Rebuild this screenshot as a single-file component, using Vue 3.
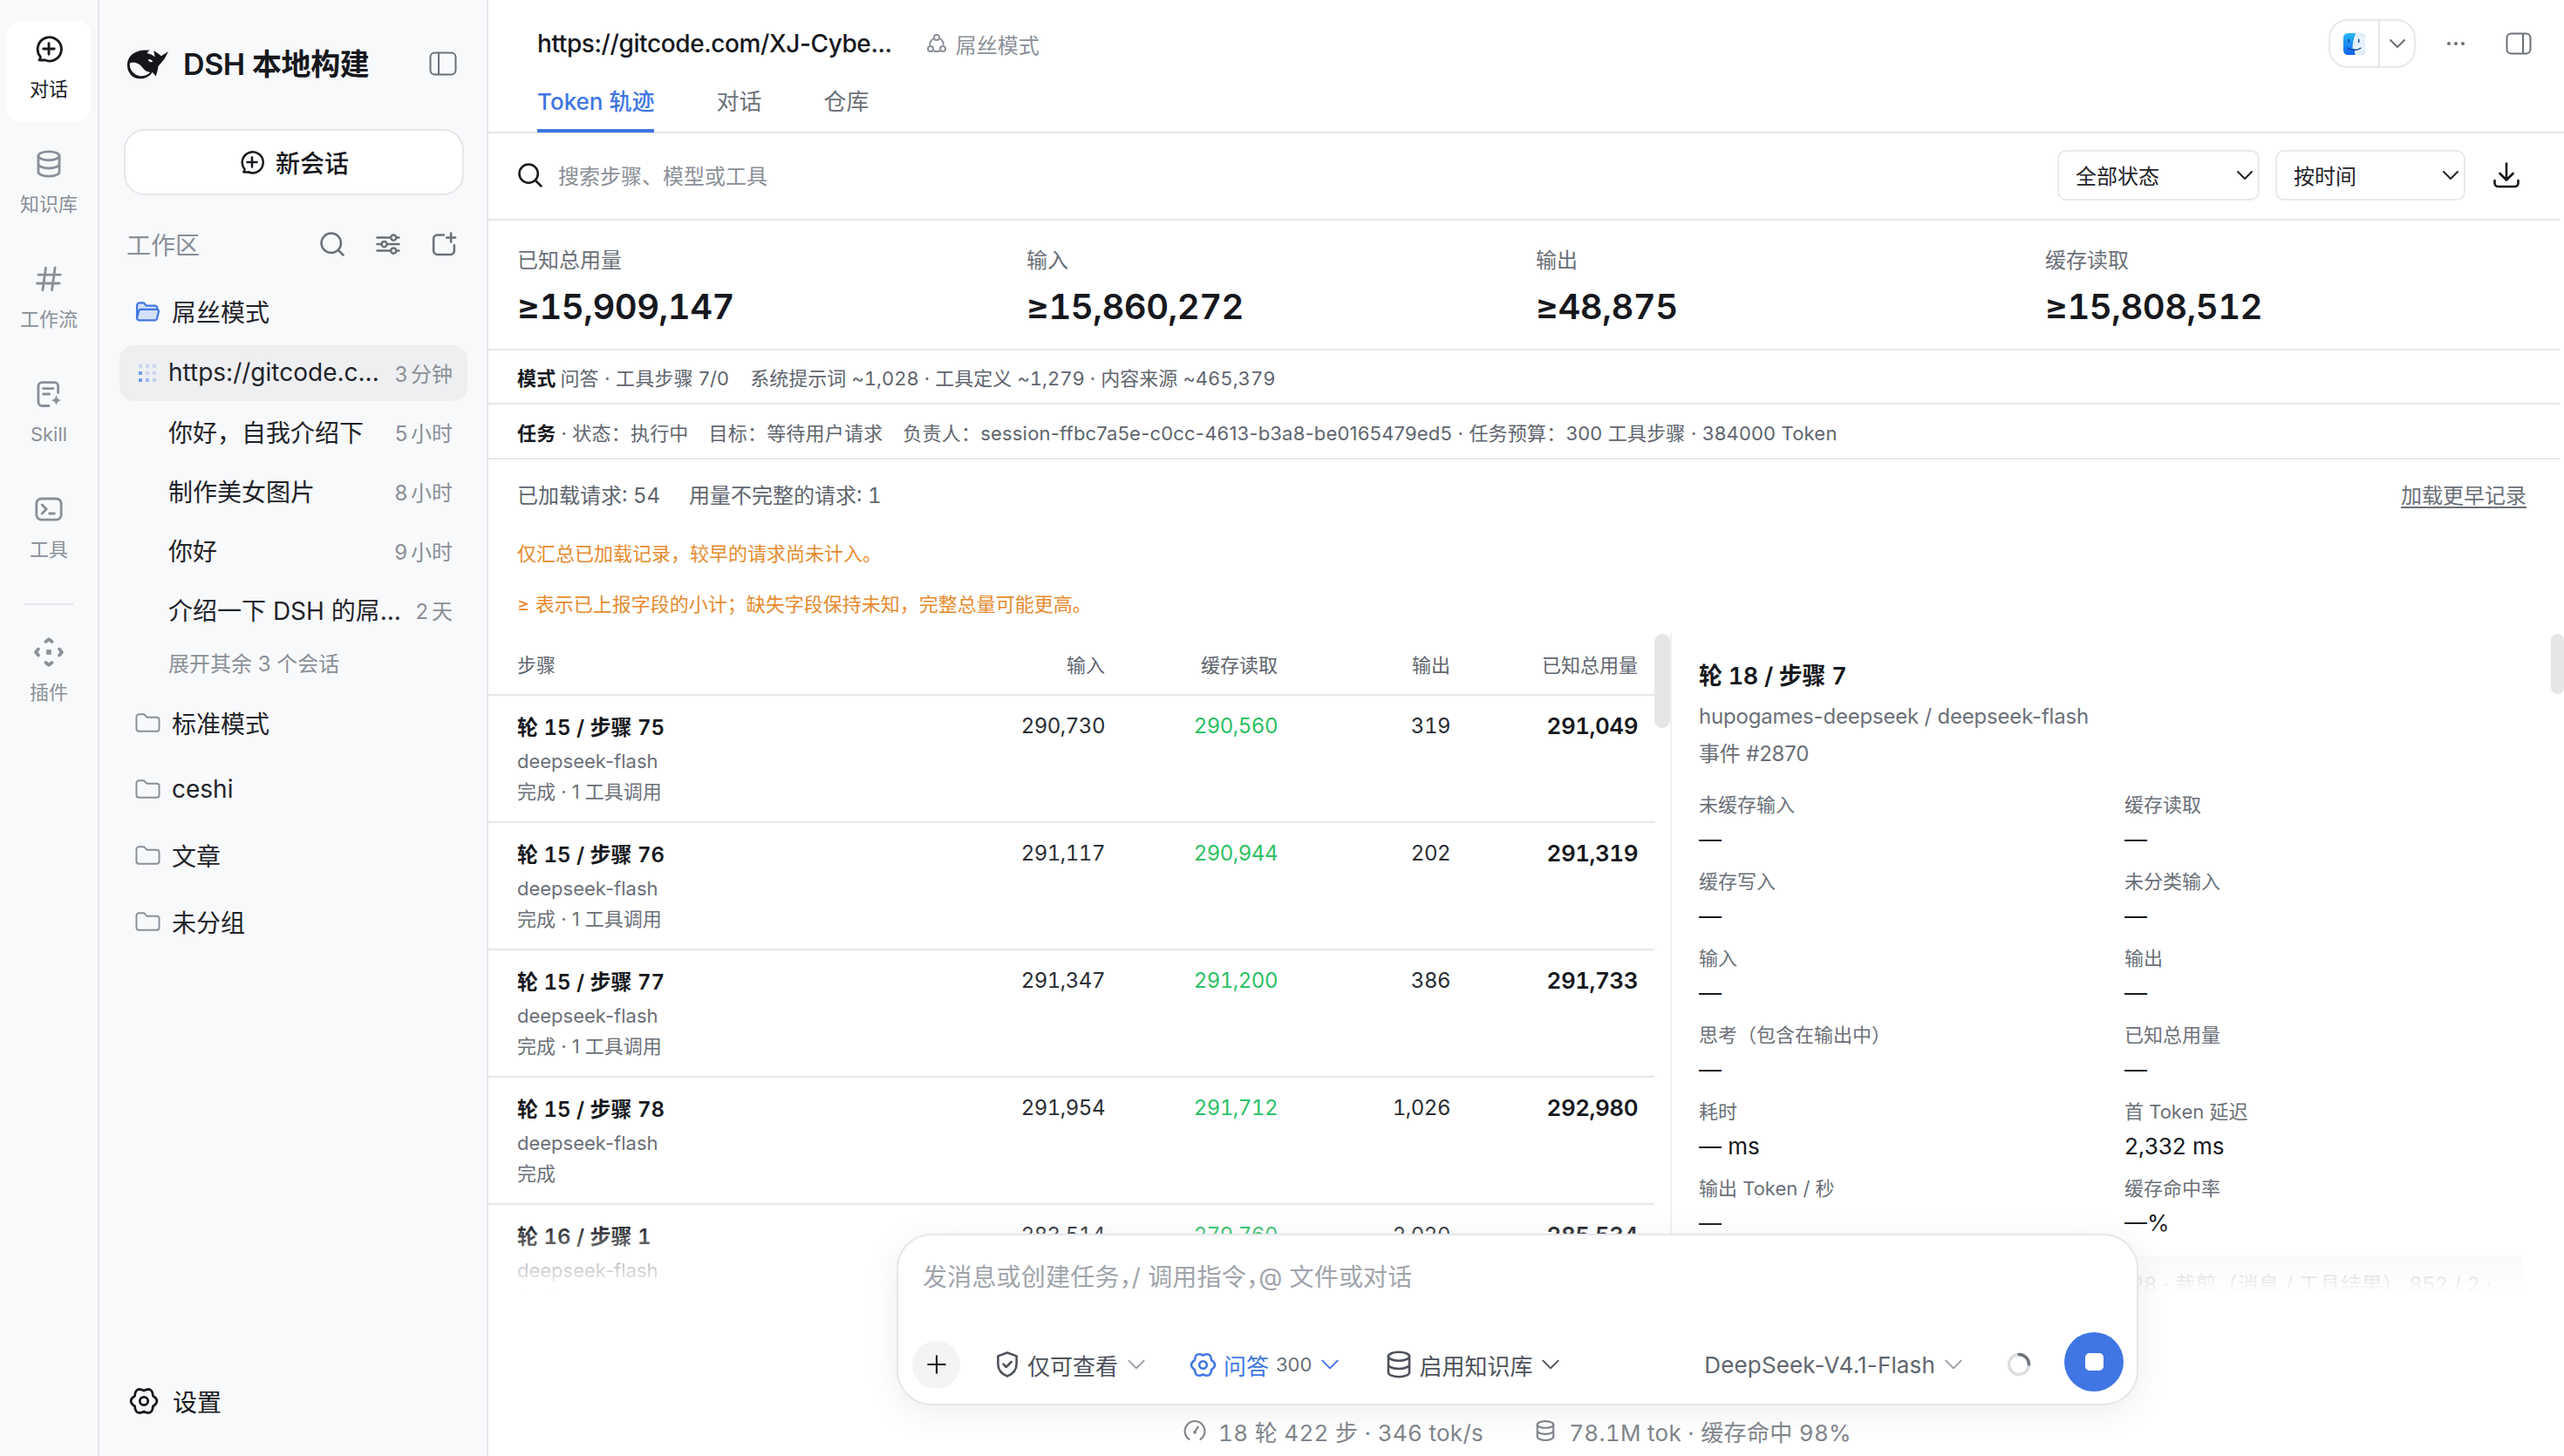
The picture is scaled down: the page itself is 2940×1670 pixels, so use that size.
<template>
  <div class="app">
    <!-- shared icons -->
    <svg class="defs" aria-hidden="true">
      <symbol id="i-chat" viewBox="0 0 24 24"><path d="M5.2 18.4A9.6 9.6 0 1 1 8.6 21c-1.4.2-3 .2-4.4.1.7-.7 1.1-1.6 1-2.7z" /><path d="M12 7.6v8.8M7.6 12h8.8" /></symbol>
      <symbol id="i-db" viewBox="0 0 24 24"><ellipse cx="12" cy="5.5" rx="8.5" ry="3.5" /><path d="M3.5 5.5v13c0 1.900 3.800 3.500 8.500 3.500s8.500-1.600 8.500-3.500v-13M3.500 12c0 1.900 3.800 3.500 8.500 3.500s8.500-1.600 8.500-3.500" /></symbol>
      <symbol id="i-hash" viewBox="0 0 24 24"><path d="M9.500 3 7 21M17 3l-2.500 18M3.500 8.500h18M2.500 15.500h18" /></symbol>
      <symbol id="i-skill" viewBox="0 0 24 24"><path d="M12 21.500H6.500a3 3 0 0 1-3-3v-13a3 3 0 0 1 3-3h10a3 3 0 0 1 3 3V11" /><path d="M7.500 7.500h8M7.500 12h5" /><path class="solid" d="M18 12.500c.5 2.900 1.600 4.100 4.500 4.500-2.900.5-4 1.600-4.500 4.500-.5-2.900-1.600-4-4.500-4.500 2.900-.4 4-1.600 4.500-4.500z" /></symbol>
      <symbol id="i-term" viewBox="0 0 24 24"><rect x="2" y="3.500" width="20" height="17" rx="4" /><path d="m6.500 8.500 3.500 3.500-3.500 3.500M12.500 15.500h4" /></symbol>
      <symbol id="i-plugin" viewBox="0 0 24 24"><path stroke-width="2.600" d="m9.500 3.500 2.500-2 2.500 2M9.500 20.500l2.500 2 2.500-2M3.500 9.500 1.500 12l2 2.500M20.500 9.500l2 2.500-2 2.500" /><rect class="solid" x="10" y="10" width="4" height="4" /></symbol>
      <symbol id="i-search" viewBox="0 0 24 24"><circle cx="10.500" cy="10.500" r="8.500" /><path d="m17 17 5 5" /></symbol>
      <symbol id="i-chev" viewBox="0 0 24 24"><path d="m4 8 8 8 8-8" /></symbol>
      <symbol id="i-folder" viewBox="0 0 30 24"><path d="M1.500 5a3 3 0 0 1 3-3h6l3.500 3.500h11.500a3 3 0 0 1 3 3V19a3 3 0 0 1-3 3h-21a3 3 0 0 1-3-3z" /></symbol>
      <symbol id="i-panel" viewBox="0 0 32 28"><rect x="1.500" y="1.500" width="29" height="25" rx="5" /><path d="M11 2v24" /></symbol>
      <symbol id="i-gear" viewBox="0 0 24 24"><path d="M19.360 7.750Q18.820.190 12 3.500 5.180.190 4.640 7.750-1.640 12 4.640 16.250 5.180 23.810 12 20.500 18.820 23.810 19.360 16.250 25.640 12 19.360 7.750Z" /><circle cx="12" cy="12" r="3.300" /></symbol>
    </svg>

    <!-- icon rail -->
    <nav class="rail">
      <template v-for="item in railItems" :key="item.label">
        <div v-if="item.label === '插件'" class="rail-sep"></div>
        <div class="rail-item" :class="{ active: item.active }">
          <svg class="ic rail-ic"><use :href="'#i-' + item.icon" /></svg>
          <span>{{ item.label }}</span>
        </div>
      </template>
    </nav>

    <!-- sessions sidebar -->
    <aside class="side">
      <div class="brand">
        <svg class="logo" viewBox="8 8 52 38">
          <path fill="#14161a" d="M10 28C10 17 20 10 33 10.500L36.500 10 33.500 14C37 15 40 16 43 18.500L41.500 11 47 14.500 50.500 17.500 59 12 54.500 20.500C52 24 49 27 47 29.500 46.500 34 45 38 44 41.500L40 36.500C37 41.500 31 44.500 25 44.500 16 44.500 10 37 10 28Z" />
          <path fill="#f8f9fb" d="M13 26C18 23.500 24 26 27.500 30.500 30.500 34.500 33.500 36.500 37.500 37 33 41 28 42 24 41 18 40 12 33.500 13 26Z" />
          <path fill="#f8f9fb" d="M35 21.500c2-.5 4.500.5 5.500 2.500-2 1.500-5 .5-5.500-2.500z" />
        </svg>
        <span class="brand-name">DSH 本地构建</span>
        <svg class="ic brand-panel"><use href="#i-panel" /></svg>
      </div>

      <button class="new-chat">
        <svg class="ic new-ic"><use href="#i-chat" /></svg>
        新会话
      </button>

      <div class="ws-head">
        <span>工作区</span>
        <div class="ws-tools">
          <svg class="ic ws-ic" viewBox="0 0 24 24"><circle cx="11" cy="11" r="9" /><path d="m18 18 4 4" /></svg>
          <svg class="ic ws-ic" viewBox="0 0 24 24"><path d="M2 6h12M19.500 6H22M2 12h4M11 12h11M2 18h12M19.500 18H22" /><circle cx="17" cy="6" r="2.500" /><circle cx="8.500" cy="12" r="2.500" /><circle cx="17" cy="18" r="2.500" /></svg>
          <svg class="ic ws-ic wide" viewBox="0 0 24 24"><path d="M12 3.500H6a3.500 3.500 0 0 0-3.500 3.500v11A3.500 3.500 0 0 0 6 21.500h12a3.500 3.500 0 0 0 3.500-3.500v-5M18.500 2v8M14.500 6h8" /></svg>
        </div>
      </div>

      <div class="folder-row">
        <svg class="folder-ic" viewBox="0 0 30 26">
          <path fill="#d3e0fa" stroke="#4076e4" stroke-width="2.400" stroke-linejoin="round" d="M1.500 6a3.500 3.500 0 0 1 3.500-3.500h5L13 6h10.500A3.500 3.500 0 0 1 27 9.500V11H7c-1.500 0-2.800 1-3.200 2.400L1.500 21z" />
          <path fill="#d3e0fa" stroke="#4076e4" stroke-width="2.400" stroke-linejoin="round" d="M3.800 12.500c.4-1 1.300-1.700 2.400-1.700h20c1.500 0 2.600 1.400 2.200 2.900l-2 8.300c-.4 1.400-1.600 2.300-3 2.300H4.500a3 3 0 0 1-3-3z" />
        </svg>
        <span>屌丝模式</span>
      </div>

      <div class="session active">
        <div class="dots">
          <i v-for="(o, n) in dotOpacity" :key="n" :style="{ opacity: o }"></i>
        </div>
        <span class="session-name">https://gitcode.c...</span>
        <span class="session-time">3 分钟</span>
      </div>
      <div v-for="s in sessions" :key="s.name" class="session">
        <span class="session-name">{{ s.name }}</span>
        <span class="session-time">{{ s.time }}</span>
      </div>
      <div class="expand">展开其余 3 个会话</div>

      <div v-for="f in folders" :key="f" class="folder-row plain">
        <svg class="ic folder-ic"><use href="#i-folder" /></svg>
        <span>{{ f }}</span>
      </div>

      <div class="settings">
        <svg class="ic set-ic"><use href="#i-gear" /></svg>
        <span>设置</span>
      </div>
    </aside>

    <!-- main -->
    <main class="main">
      <header class="head">
        <div class="head-top">
          <span class="head-title">https://gitcode.com/XJ-Cybe...</span>
          <span class="head-mode">
            <svg class="ic mode-ic" viewBox="0 0 24 24"><circle cx="12" cy="5" r="3" /><circle cx="5" cy="18" r="3" /><circle cx="19" cy="18" r="3" /><path d="M8 6.500C5.500 8 4.300 10.500 4.300 13M16 6.500c2.500 1.500 3.700 4 3.700 6.500M9 20.500c2 .7 4 .7 6 0" /></svg>
            屌丝模式
          </span>
          <div class="head-right">
            <div class="open-with">
              <div class="open-app">
                <svg class="finder" viewBox="0 0 24 24">
                  <defs>
                    <linearGradient id="finderBlue" x1="0" y1="0" x2="0" y2="1"><stop offset="0" stop-color="#25b9f8" /><stop offset="1" stop-color="#1463ee" /></linearGradient>
                  </defs>
                  <rect width="24" height="24" rx="5" fill="url(#finderBlue)" />
                  <path fill="#e3f1fc" d="M13.500 0H19a5 5 0 0 1 5 5v14a5 5 0 0 1-5 5h-6c-.6-3-.8-5-.8-7H10c0-6 1.500-11 3.500-17z" />
                  <path d="M6 7v3M17 7v3M5 16.500c4 3 10 3 14 0" fill="none" stroke="#0c3c86" stroke-width="1.300" stroke-linecap="round" />
                </svg>
              </div>
              <div class="open-caret"><svg class="ic caret-ic"><use href="#i-chev" /></svg></div>
            </div>
            <div class="more"><i></i><i></i><i></i></div>
            <svg class="ic head-panel" viewBox="0 0 30 26"><rect x="1.500" y="1.500" width="27" height="23" rx="5" /><path d="M20 2v22" /></svg>
          </div>
        </div>
        <div class="tabs">
          <span v-for="(t, i) in tabs" :key="t" class="tab" :class="{ on: i === 0 }">{{ t }}</span>
        </div>
      </header>

      <div class="summary">
        <div class="toolbar">
          <svg class="ic tool-search"><use href="#i-search" /></svg>
          <span class="search-ph">搜索步骤、模型或工具</span>
          <div class="sel sel-status">全部状态<svg class="ic sel-caret"><use href="#i-chev" /></svg></div>
          <div class="sel sel-order">按时间<svg class="ic sel-caret"><use href="#i-chev" /></svg></div>
          <svg class="ic dl-ic" viewBox="0 0 30 30"><path d="M15 1.500v19M7.500 13l7.500 7.500 7.500-7.500M1.500 21v3a4 4 0 0 0 4 4h19a4 4 0 0 0 4-4v-3" /></svg>
        </div>

        <div class="stats">
          <div v-for="s in stats" :key="s.label" class="stat">
            <div class="stat-label">{{ s.label }}</div>
            <div class="stat-value">{{ s.value }}</div>
          </div>
        </div>

        <div class="info first">
          <b>模式</b>
          <span class="info-a">问答 · 工具步骤 7/0</span>
          <span class="info-b">系统提示词 ~1,028 · 工具定义 ~1,279 · 内容来源 ~465,379</span>
        </div>
        <div class="info">
          <b>任务</b>
          <span class="info-c">· 状态：执行中</span>
          <span class="info-d">目标：等待用户请求</span>
          <span class="info-d">负责人：session-ffbc7a5e-c0cc-4613-b3a8-be0165479ed5 · 任务预算：300 工具步骤 · 384000 Token</span>
        </div>

        <div class="notes">
          <div class="load-row">
            <span>已加载请求: 54</span>
            <span class="load-b">用量不完整的请求: 1</span>
            <a class="load-more">加载更早记录</a>
          </div>
          <div class="warn warn-1">仅汇总已加载记录，较早的请求尚未计入。</div>
          <div class="warn warn-2">≥ 表示已上报字段的小计；缺失字段保持未知，完整总量可能更高。</div>
        </div>
      </div>

      <div class="split">
        <section class="table">
          <div class="tr th">
            <span>步骤</span><span>输入</span><span>缓存读取</span><span>输出</span><span>已知总用量</span>
          </div>
          <div v-for="r in rows" :key="r.step" class="tr row">
            <div>
              <div class="step">{{ r.step }}</div>
              <div class="model">deepseek-flash</div>
              <div class="state">{{ r.state }}</div>
            </div>
            <span class="num">{{ r.input }}</span>
            <span class="num green">{{ r.cache }}</span>
            <span class="num">{{ r.output }}</span>
            <span class="num strong">{{ r.total }}</span>
          </div>
        </section>

        <div class="gutter"><div class="thumb"></div></div>

        <section class="detail">
          <div class="detail-thumb"></div>
          <div class="detail-title">轮 18 / 步骤 7</div>
          <div class="detail-sub first">hupogames-deepseek / deepseek-flash</div>
          <div class="detail-sub second">事件 #2870</div>
          <div class="fields">
            <div v-for="f in fields" :key="f.label" class="field">
              <div class="field-label">{{ f.label }}</div>
              <div class="field-value">{{ f.value }}</div>
            </div>
          </div>
          <div class="trim-box">1,028 · 裁剪（消息 / 工具结果） 852 / 2 ·</div>
        </section>
      </div>

      <div class="fade"></div>

      <div class="dock">
        <div class="composer">
          <div class="composer-ph">发消息或创建任务，/ 调用指令，@ 文件或对话</div>
          <div class="controls">
            <div class="plus"><svg class="ic plus-ic" viewBox="0 0 24 24"><path d="M12 3v18M3 12h18" /></svg></div>
            <div class="ctl ctl-perm">
              <svg class="ic ctl-ic" viewBox="0 0 24 24"><path d="M12 2.500 4.500 5.200v6.300c0 4.800 3 8.300 7.500 10 4.500-1.700 7.500-5.200 7.500-10V5.200z" /><path d="m8.800 11.800 2.300 2.300 4.200-4.200" /></svg>
              <span>仅可查看</span>
              <svg class="ic ctl-caret light"><use href="#i-chev" /></svg>
            </div>
            <div class="ctl ctl-mode">
              <svg class="ic gear-ic"><use href="#i-gear" /></svg>
              <span>问答</span>
              <em>300</em>
              <svg class="ic ctl-caret"><use href="#i-chev" /></svg>
            </div>
            <div class="ctl ctl-kb">
              <svg class="ic ctl-ic"><use href="#i-db" /></svg>
              <span>启用知识库</span>
              <svg class="ic ctl-caret"><use href="#i-chev" /></svg>
            </div>
            <div class="ctl ctl-model">
              <span>DeepSeek-V4.1-Flash</span>
              <svg class="ic ctl-caret light"><use href="#i-chev" /></svg>
            </div>
            <svg class="spinner" viewBox="0 0 28 28">
              <circle cx="14" cy="14" r="11.500" fill="none" stroke="#dcdee2" stroke-width="3.500" />
              <path d="M14 2.500A11.500 11.500 0 0 1 25.500 14" fill="none" stroke="#6f747c" stroke-width="3.500" stroke-linecap="round" />
            </svg>
            <div class="stop"><i></i></div>
          </div>
        </div>
        <div class="statusline">
          <svg class="ic st-ic" viewBox="0 0 24 24"><path d="M6 21a10.500 10.500 0 1 1 12 0" /><path d="m12 13 3.500-5" /><circle class="solid" cx="12" cy="13.500" r="1.800" /></svg>
          <span class="st-a">18 轮 422 步 · 346 tok/s</span>
          <svg class="ic st-ic st-db"><use href="#i-db" /></svg>
          <span>78.1M tok · 缓存命中 98%</span>
        </div>
      </div>
    </main>
  </div>
</template>

<script setup>
const railItems = [
  { label: '对话', icon: 'chat', active: true },
  { label: '知识库', icon: 'db' },
  { label: '工作流', icon: 'hash' },
  { label: 'Skill', icon: 'skill' },
  { label: '工具', icon: 'term' },
  { label: '插件', icon: 'plugin' },
]

const dotOpacity = [0.2, 0.2, 0.2, 0.7, 0.2, 0.2, 0.7, 0.45, 0.25]

const sessions = [
  { name: '你好，自我介绍下', time: '5 小时' },
  { name: '制作美女图片', time: '8 小时' },
  { name: '你好', time: '9 小时' },
  { name: '介绍一下 DSH 的屌...', time: '2 天' },
]

const folders = ['标准模式', 'ceshi', '文章', '未分组']

const tabs = ['Token 轨迹', '对话', '仓库']

const stats = [
  { label: '已知总用量', value: '≥15,909,147' },
  { label: '输入', value: '≥15,860,272' },
  { label: '输出', value: '≥48,875' },
  { label: '缓存读取', value: '≥15,808,512' },
]

const rows = [
  { step: '轮 15 / 步骤 75', state: '完成 · 1 工具调用', input: '290,730', cache: '290,560', output: '319', total: '291,049' },
  { step: '轮 15 / 步骤 76', state: '完成 · 1 工具调用', input: '291,117', cache: '290,944', output: '202', total: '291,319' },
  { step: '轮 15 / 步骤 77', state: '完成 · 1 工具调用', input: '291,347', cache: '291,200', output: '386', total: '291,733' },
  { step: '轮 15 / 步骤 78', state: '完成', input: '291,954', cache: '291,712', output: '1,026', total: '292,980' },
  { step: '轮 16 / 步骤 1', state: '完成', input: '283,514', cache: '279,760', output: '2,020', total: '285,534' },
]

const fields = [
  { label: '未缓存输入', value: '—' },
  { label: '缓存读取', value: '—' },
  { label: '缓存写入', value: '—' },
  { label: '未分类输入', value: '—' },
  { label: '输入', value: '—' },
  { label: '输出', value: '—' },
  { label: '思考（包含在输出中）', value: '—' },
  { label: '已知总用量', value: '—' },
  { label: '耗时', value: '— ms' },
  { label: '首 Token 延迟', value: '2,332 ms' },
  { label: '输出 Token / 秒', value: '—' },
  { label: '缓存命中率', value: '—%' },
]
</script>

<style>
html,
body {
  margin: 0;
  background: #fff;
}
</style>

<style scoped>
.app {
  display: flex;
  width: 2940px;
  height: 1670px;
  overflow: hidden;
  font-family: Inter, "Noto Sans CJK SC", sans-serif;
  color: #16181d;
  background: #fff;
}

.defs {
  position: absolute;
  width: 0;
  height: 0;
}

.ic {
  fill: none;
  stroke: currentColor;
  stroke-width: 2;
  stroke-linecap: round;
  stroke-linejoin: round;
  flex: none;
}

.solid {
  fill: currentColor;
  stroke: none;
}

/* rail */
.rail {
  width: 114px;
  flex: none;
  box-sizing: border-box;
  padding: 24px 8px 0;
  background: #f8f9fb;
  border-right: 2px solid #e6e7ea;
  display: flex;
  flex-direction: column;
  gap: 16px;
}

.rail-item {
  height: 116px;
  box-sizing: border-box;
  padding-top: 15px;
  border-radius: 16px;
  display: flex;
  flex-direction: column;
  align-items: center;
  color: #8a8f98;
  font-size: 22px;
  line-height: 34px;
}

.rail-item.active {
  background: #fff;
  color: #16181d;
}

.rail-ic {
  width: 34px;
  height: 34px;
  margin-bottom: 12px;
}

.rail-sep {
  width: 56px;
  height: 2px;
  margin: 8px auto 6px 20px;
  background: #e6e7ea;
}

/* sidebar */
.side {
  width: 446px;
  flex: none;
  box-sizing: border-box;
  padding-top: 43px;
  background: #f8f9fb;
  border-right: 2px solid #e6e7ea;
  display: flex;
  flex-direction: column;
}

.brand {
  height: 60px;
  display: flex;
  align-items: center;
  padding-left: 30px;
}

.logo {
  width: 50px;
  height: 37px;
  flex: none;
}

.brand-name {
  margin-left: 16px;
  padding-bottom: 3px;
  font-size: 34px;
  letter-spacing: -0.4px;
  font-weight: 600;
}

.brand-panel {
  width: 32px;
  height: 28px;
  margin-left: auto;
  margin-right: 34px;
  color: #6b7078;
}

.new-chat {
  margin: 45px 26px 0 28px;
  height: 76px;
  box-sizing: border-box;
  background: #fff;
  border: 2px solid #e6e7ea;
  border-radius: 24px;
  display: flex;
  align-items: center;
  justify-content: center;
  gap: 12px;
  padding-bottom: 2px;
  font-family: inherit;
  font-size: 28px;
  font-weight: 500;
  color: #16181d;
}

.new-ic {
  width: 30px;
  height: 30px;
}

.ws-head {
  margin-top: 31px;
  height: 50px;
  display: flex;
  align-items: center;
  padding-left: 31px;
  font-size: 28px;
  color: #8a8f98;
}

.ws-tools {
  margin-left: auto;
  margin-right: 34px;
  display: flex;
  align-items: center;
  gap: 34px;
  color: #6b7078;
}

.ws-ic {
  width: 30px;
  height: 30px;
}

.folder-row {
  height: 76px;
  flex: none;
  box-sizing: border-box;
  margin-top: 15px;
  padding: 0 0 2px 41px;
  display: flex;
  align-items: center;
  gap: 13px;
  font-size: 28px;
  color: #1f2329;
}

.folder-row.plain {
  margin-top: 0;
}

.expand + .folder-row.plain {
  margin-top: 8px;
}

.folder-ic {
  width: 29px;
  height: 24px;
}

.folder-row.plain .folder-ic {
  color: #8a8f98;
}

.session {
  position: relative;
  height: 64px;
  flex: none;
  box-sizing: border-box;
  margin: 0 22px 4px 23px;
  padding: 0 17px 2px 56px;
  border-radius: 16px;
  display: flex;
  align-items: center;
  justify-content: space-between;
  font-size: 28px;
  color: #1f2329;
}

.session.active {
  background: #eeeff1;
}

.dots {
  position: absolute;
  left: 22px;
  top: 22px;
  display: grid;
  grid-template-columns: repeat(3, 4px);
  gap: 4px;
}

.dots i {
  width: 4px;
  height: 4px;
  background: #4076e4;
}

.session-time {
  font-size: 24px;
  color: #8a8f98;
  word-spacing: -3px;
  white-space: nowrap;
}

.session-name {
  white-space: nowrap;
}

.expand {
  height: 48px;
  flex: none;
  box-sizing: border-box;
  padding: 0 0 2px 79px;
  display: flex;
  align-items: center;
  font-size: 24px;
  color: #8a8f98;
}

.settings {
  margin-top: auto;
  height: 60px;
  margin-bottom: 33px;
  padding-left: 34px;
  display: flex;
  align-items: center;
  gap: 16px;
  font-size: 28px;
}

.set-ic {
  width: 34px;
  height: 34px;
  stroke-width: 2;
}

/* main */
.main {
  position: relative;
  flex: 1;
  min-width: 0;
  display: flex;
  flex-direction: column;
}

.head {
  height: 153px;
  flex: none;
  box-sizing: border-box;
  border-bottom: 2px solid #e6e7ea;
}

.head-top {
  height: 100px;
  padding-left: 56px;
  display: flex;
  align-items: center;
}

.head-title {
  font-size: 28px;
  letter-spacing: -0.4px;
  font-weight: 500;
  white-space: nowrap;
}

.head-mode {
  margin-left: 39px;
  display: flex;
  align-items: center;
  gap: 10px;
  font-size: 24px;
  color: #8a8f98;
}

.mode-ic {
  width: 24px;
  height: 24px;
}

.head-right {
  margin-left: auto;
  display: flex;
  align-items: center;
}

.open-with {
  width: 100px;
  height: 56px;
  box-sizing: border-box;
  border: 2px solid #e6e7ea;
  border-radius: 22px;
  display: flex;
}

.open-app {
  width: 55px;
  display: flex;
  align-items: center;
  justify-content: center;
  border-right: 2px solid #e6e7ea;
}

.finder {
  width: 25px;
  height: 25px;
}

.open-caret {
  flex: 1;
  display: flex;
  align-items: center;
  justify-content: center;
  color: #6b7078;
}

.caret-ic {
  width: 24px;
  height: 24px;
}

.more {
  margin-left: 36px;
  display: flex;
  gap: 4px;
}

.more i {
  width: 4px;
  height: 4px;
  border-radius: 50%;
  background: #6b7078;
}

.head-panel {
  width: 30px;
  height: 26px;
  margin-left: 47px;
  margin-right: 37px;
  color: #6b7078;
}

.tabs {
  height: 51px;
  padding-left: 56px;
  display: flex;
  gap: 71px;
}

.tab {
  font-size: 26px;
  line-height: 34px;
  color: #6b7078;
  box-sizing: border-box;
  height: 52px;
}

.tab.on {
  color: #4076e4;
  border-bottom: 4px solid #4076e4;
  font-weight: 500;
}

.summary {
  flex: none;
  margin-right: 5px;
}

.toolbar {
  height: 100px;
  box-sizing: border-box;
  padding: 0 46px 3px 33px;
  border-bottom: 2px solid #e6e7ea;
  display: flex;
  align-items: center;
}

.tool-search {
  width: 30px;
  height: 30px;
}

.search-ph {
  margin-left: 17px;
  font-size: 24px;
  color: #8a8f98;
}

.sel {
  height: 58px;
  box-sizing: border-box;
  padding: 0 3px 0 19px;
  border: 2px solid #e8e9ec;
  border-radius: 10px;
  display: flex;
  align-items: center;
  justify-content: space-between;
  font-size: 24px;
  color: #1f2329;
}

.sel-status {
  width: 232px;
  margin-left: auto;
}

.sel-order {
  width: 218px;
  margin-left: 18px;
}

.sel-caret {
  width: 24px;
  height: 24px;
}

.dl-ic {
  width: 30px;
  height: 30px;
  margin-left: 32px;
  stroke-width: 2.6;
}

.stats {
  height: 149px;
  box-sizing: border-box;
  padding: 31px 0 0 33px;
  border-bottom: 2px solid #e6e7ea;
  display: grid;
  grid-template-columns: repeat(4, 584px);
}

.stat-label {
  font-size: 24px;
  line-height: 30px;
  color: #6b7078;
}

.stat-value {
  margin-top: 13px;
  font-size: 40px;
  line-height: 50px;
  font-weight: 600;
  font-variant-numeric: tabular-nums;
  letter-spacing: -0.5px;
}

.info {
  height: 63px;
  box-sizing: border-box;
  padding-left: 33px;
  border-bottom: 2px solid #e6e7ea;
  display: flex;
  align-items: center;
  font-size: 22px;
  letter-spacing: 0.2px;
  color: #60656e;
  white-space: nowrap;
}

.info.first {
  height: 62px;
}

.info b {
  font-weight: 600;
  color: #16181d;
}

.info-a {
  margin-left: 5px;
}

.info-b {
  margin-left: 24px;
  font-variant-numeric: tabular-nums;
  letter-spacing: 0.05px;
}

.info-c {
  margin-left: 6px;
}

.info-d {
  margin-left: 23px;
}

.notes {
  height: 200px;
  box-sizing: border-box;
  padding: 19px 0 0 33px;
  font-size: 24px;
}

.load-row {
  height: 40px;
  padding-right: 38px;
  display: flex;
  align-items: center;
  color: #60656e;
  font-variant-numeric: tabular-nums;
}

.load-b {
  margin-left: 33px;
}

.load-more {
  margin-left: auto;
  color: #6b7078;
  text-decoration: underline;
  text-underline-offset: 4px;
}

.warn {
  height: 40px;
  display: flex;
  align-items: center;
  font-size: 22px;
  color: #e68a2e;
}

.warn-1 {
  margin-top: 27px;
}

.warn-2 {
  margin-top: 18px;
}

.split {
  flex: 1;
  min-height: 0;
  display: flex;
}

.table {
  width: 1337px;
  flex: none;
}

.tr {
  display: grid;
  grid-template-columns: 1fr 198px 198px 198px 215px;
  box-sizing: border-box;
  padding: 0 19px 0 33px;
  border-bottom: 2px solid #e6e7ea;
}

.th {
  height: 71px;
  align-items: center;
  padding-bottom: 2px;
  font-size: 22px;
  color: #60656e;
}

.th span:not(:first-child) {
  text-align: right;
}

.row {
  height: 146px;
  padding-top: 20px;
}

.step {
  font-size: 24px;
  line-height: 34px;
  font-weight: 600;
  font-variant-numeric: tabular-nums;
}

.model {
  margin-top: 4px;
  font-size: 22px;
  line-height: 34px;
  color: #6b7078;
}

.state {
  font-size: 22px;
  line-height: 36px;
  color: #6b7078;
}

.num {
  font-size: 24px;
  line-height: 30px;
  text-align: right;
  font-variant-numeric: tabular-nums;
  letter-spacing: -0.5px;
  color: #2a2d33;
}

.num.green {
  color: #2cc065;
}

.num.strong {
  font-size: 26px;
  font-weight: 600;
  color: #16181d;
}

.gutter {
  width: 18px;
  flex: none;
}

.thumb {
  height: 108px;
  border-radius: 9px;
  background: #e5e5e6;
}

.detail {
  position: relative;
  flex: 1;
  min-width: 0;
  box-sizing: border-box;
  padding: 29px 0 0 31px;
  border-left: 2px solid #eeeff1;
}

.detail-thumb {
  position: absolute;
  right: 0;
  top: 0;
  width: 15px;
  height: 69px;
  border-radius: 8px;
  background: #e5e5e6;
}

.detail-title {
  font-size: 27px;
  line-height: 40px;
  font-weight: 600;
  font-variant-numeric: tabular-nums;
  letter-spacing: -0.3px;
}

.detail-sub {
  font-size: 24px;
  letter-spacing: -0.2px;
  line-height: 40px;
  color: #6b7078;
}

.detail-sub.first {
  margin-top: 6px;
}

.detail-sub.second {
  margin-top: 3px;
}

.fields {
  margin-top: 23px;
  display: grid;
  grid-template-columns: 488px 1fr;
  row-gap: 18px;
}

.field-label {
  font-size: 22px;
  line-height: 30px;
  color: #6b7078;
}

.field-value {
  margin-top: 10px;
  font-size: 26px;
  line-height: 30px;
  color: #16181d;
}

.trim-box {
  width: 945px;
  height: 70px;
  box-sizing: border-box;
  margin-top: 22px;
  padding-right: 36px;
  text-align: right;
  font-size: 24px;
  line-height: 68px;
  color: #8a8f98;
  background: #f5f5f6;
  white-space: nowrap;
  overflow: hidden;
}

.fade {
  position: absolute;
  left: 0;
  right: 0;
  bottom: 0;
  height: 270px;
  background: linear-gradient(rgba(255, 255, 255, 0) 0, #fff 31%);
}

.dock {
  position: absolute;
  left: 0;
  right: 20px;
  bottom: 12px;
  display: flex;
  flex-direction: column;
  align-items: center;
}

.composer {
  width: 1424px;
  height: 197px;
  box-sizing: border-box;
  padding: 28px 15px 0 16px;
  background: #fff;
  border: 2px solid #e6e7ea;
  border-radius: 40px;
  box-shadow: 0 8px 40px rgba(0, 0, 0, 0.07);
  display: flex;
  flex-direction: column;
}

.composer-ph {
  padding-left: 12px;
  font-size: 28px;
  line-height: 40px;
  font-feature-settings: "halt";
  letter-spacing: 0.2px;
  color: #a0a4ab;
}

.controls {
  margin-top: 46px;
  height: 68px;
  display: flex;
  align-items: center;
}

.plus {
  width: 55px;
  height: 55px;
  border-radius: 50%;
  background: #f3f4f6;
  display: flex;
  align-items: center;
  justify-content: center;
  color: #16181d;
}

.plus-ic {
  width: 26px;
  height: 26px;
}

.ctl {
  display: flex;
  align-items: center;
  font-size: 26px;
  color: #4d5159;
  white-space: nowrap;
}

.ctl-ic {
  width: 34px;
  height: 34px;
  margin-right: 6px;
  stroke-width: 1.8;
}

.gear-ic {
  width: 31px;
  height: 31px;
  margin-right: 8px;
}

.ctl-caret {
  width: 26px;
  height: 26px;
  margin-left: 8px;
  stroke-width: 1.800;
}

.ctl-caret.light {
  color: #9a9ea6;
}

.ctl-perm {
  margin-left: 37px;
}

.ctl-mode {
  margin-left: 48px;
  color: #4076e4;
}

.ctl-mode em {
  margin-left: 8px;
  font-style: normal;
  font-size: 22px;
  color: #6b7078;
}

.ctl-kb {
  margin-left: 49px;
}

.ctl-model {
  margin-left: auto;
  color: #60656e;
  letter-spacing: 0.15px;
}

.spinner {
  width: 28px;
  height: 28px;
  margin-left: 48px;
  flex: none;
}

.stop {
  width: 68px;
  height: 68px;
  margin-left: 38px;
  margin-bottom: 6px;
  border-radius: 50%;
  background: #4076e4;
  display: flex;
  align-items: center;
  justify-content: center;
}

.stop i {
  width: 21px;
  height: 20px;
  border-radius: 5px;
  background: #fff;
}

.statusline {
  margin-top: 12px;
  height: 34px;
  display: flex;
  align-items: center;
  font-size: 26px;
  letter-spacing: 0.3px;
  font-variant-numeric: tabular-nums;
  color: #80858c;
  white-space: nowrap;
}

.st-ic {
  width: 26px;
  height: 26px;
  margin-right: 14px;
}

.st-a {
  margin-right: 58px;
}
</style>
